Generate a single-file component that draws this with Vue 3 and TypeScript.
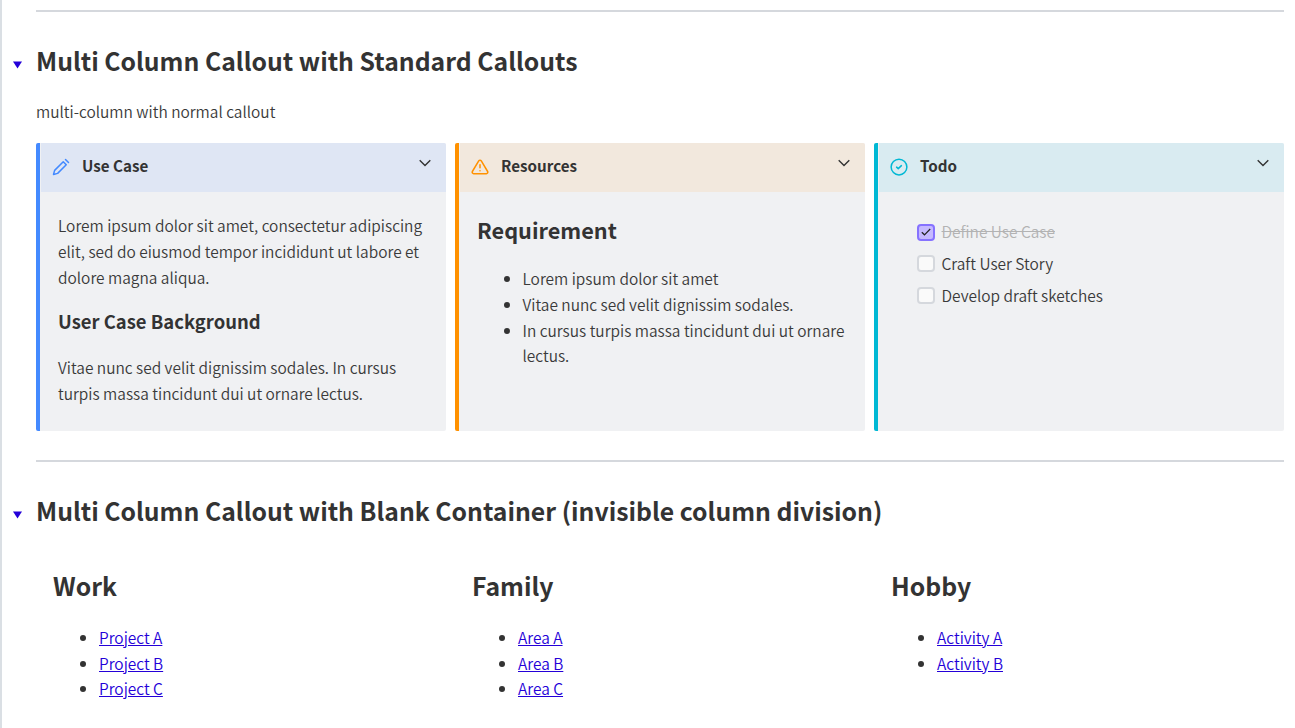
<script setup lang="ts">
interface LinkGroup {
  title: string
  links: string[]
}
interface Task {
  label: string
  done: boolean
}

const requirements: string[] = [
  'Lorem ipsum dolor sit amet',
  'Vitae nunc sed velit dignissim sodales.',
  'In cursus turpis massa tincidunt dui ut ornare lectus.',
]
const tasks: Task[] = [
  { label: 'Define Use Case', done: true },
  { label: 'Craft User Story', done: false },
  { label: 'Develop draft sketches', done: false },
]
const groups: LinkGroup[] = [
  { title: 'Work', links: ['Project A', 'Project B', 'Project C'] },
  { title: 'Family', links: ['Area A', 'Area B', 'Area C'] },
  { title: 'Hobby', links: ['Activity A', 'Activity B'] },
]
</script>

<template>
  <main class="page">
    <hr class="rule" />
    <h1 class="heading">
      <svg class="marker" viewBox="0 0 9 8"><path d="M0 .6h9L4.500 7.400z" /></svg>
      <span>Multi Column Callout with Standard Callouts</span>
    </h1>
    <p class="intro">multi-column with normal callout</p>

    <div class="columns">
      <section class="callout blue">
        <header class="bar">
          <svg class="icon" viewBox="0 0 24 24"><path d="M18 2l4 4M7.500 20.500L19 9l-4-4L3.500 16.500 2 22z" /></svg>
          <span class="title">Use Case</span>
          <svg class="chevron" viewBox="0 0 12 8"><path d="M.7 1.200L6 6.500l5.300-5.300" /></svg>
        </header>
        <div class="body">
          <p class="text">Lorem ipsum dolor sit amet, consectetur adipiscing elit, sed do eiusmod tempor incididunt ut labore et dolore magna aliqua.</p>
          <h3 class="sub">User Case Background</h3>
          <p class="text">Vitae nunc sed velit dignissim sodales. In cursus turpis massa tincidunt dui ut ornare lectus.</p>
        </div>
      </section>

      <section class="callout orange">
        <header class="bar">
          <svg class="icon" viewBox="0 0 24 24"><path d="M10.290 3.860L1.820 18a2 2 0 0 0 1.710 3h16.940a2 2 0 0 0 1.710-3L13.710 3.860a2 2 0 0 0-3.420 0zM12 9v4M12 17h.01" /></svg>
          <span class="title">Resources</span>
          <svg class="chevron" viewBox="0 0 12 8"><path d="M.7 1.200L6 6.500l5.300-5.300" /></svg>
        </header>
        <div class="body">
          <h2 class="require">Requirement</h2>
          <ul class="list">
            <li v-for="r in requirements" :key="r">{{ r }}</li>
          </ul>
        </div>
      </section>

      <section class="callout cyan">
        <header class="bar">
          <svg class="icon" viewBox="0 0 24 24"><circle cx="12" cy="12" r="10.500" /><path d="M8.800 12.200l2.200 2 4.200-4" /></svg>
          <span class="title">Todo</span>
          <svg class="chevron" viewBox="0 0 12 8"><path d="M.7 1.200L6 6.500l5.300-5.300" /></svg>
        </header>
        <div class="body">
          <ul class="tasks">
            <li v-for="t in tasks" :key="t.label" :class="{ done: t.done }">
              <span class="box">
                <svg v-if="t.done" viewBox="0 0 10 8"><path d="M.8 4.200l2.700 2.600L9.200 1" /></svg>
              </span>
              <span class="label">{{ t.label }}</span>
            </li>
          </ul>
        </div>
      </section>
    </div>

    <hr class="rule second" />
    <h1 class="heading">
      <svg class="marker" viewBox="0 0 9 8"><path d="M0 .6h9L4.500 7.400z" /></svg>
      <span>Multi Column Callout with Blank Container (invisible column division)</span>
    </h1>

    <div class="columns blank">
      <section v-for="g in groups" :key="g.title" class="group">
        <h1 class="heading">{{ g.title }}</h1>
        <ul class="list">
          <li v-for="l in g.links" :key="l"><a href="#">{{ l }}</a></li>
        </ul>
      </section>
    </div>
  </main>
</template>

<style>
body {
  margin: 0;
  overflow: hidden;
  background: #fff;
}
</style>

<style scoped>
.page {
  box-sizing: border-box;
  height: 728px;
  padding: 10px 11px 0 34px;
  border-left: 2px solid #dadfe4;
  overflow: hidden;
  color: #3a3a3a;
  font-family: "Noto Sans CJK SC", "Noto Sans", sans-serif;
  font-size: 15.450px;
  font-weight: 350;
  line-height: 25.700px;
}
h1, h2, h3, p, ul, hr {
  margin: 0;
  padding: 0;
}
h1, h2, h3, .title, li::marker {
  color: #333;
}
.rule {
  height: 2px;
  border: 0;
  background: #d5d8dd;
}
.rule.second {
  margin-top: 29px;
}
.heading {
  display: flex;
  align-items: center;
  height: 40px;
  margin-top: 28px;
  font-size: 24.770px;
  font-weight: 700;
  line-height: 40px;
  white-space: nowrap;
}
.marker {
  width: 9px;
  height: 8px;
  margin: 9px 14px 0 -23px;
  fill: #2400d8;
}
.intro {
  margin-top: 19px;
  height: 26px;
}
.columns {
  display: grid;
  grid-template-columns: repeat(3, 410px);
  gap: 9px;
}
.intro + .columns {
  margin-top: 18px;
}
.callout {
  box-sizing: border-box;
  height: 288px;
  border-left: 4px solid var(--accent);
  border-radius: 2px;
  background: #f0f1f3;
  overflow: hidden;
}
.blue { --accent: #448aff; --tint: #dfe6f4; }
.orange { --accent: #ff9100; --tint: #f2e8dd; }
.cyan { --accent: #00b8d4; --tint: #d9ebf1; }
.bar {
  display: flex;
  align-items: center;
  box-sizing: border-box;
  height: 49px;
  margin-left: 1px;
  padding: 0 15px 3px 11px;
  background: var(--tint);
}
.icon {
  width: 18px;
  height: 18px;
  margin-top: 2px;
  fill: none;
  stroke: var(--accent);
  stroke-width: 2;
  stroke-linecap: round;
  stroke-linejoin: round;
}
.title {
  flex: 1;
  margin-left: 12px;
  font-weight: 700;
  font-size: 15.200px;
}
.chevron {
  width: 12px;
  height: 8px;
  margin-bottom: 6px;
  fill: none;
  stroke: #333;
  stroke-width: 1.400;
}
.body {
  padding: 21.300px 16px 0 18px;
}
.sub {
  margin: 18px 0 21px;
  font-size: 18.450px;
  font-weight: 700;
  line-height: 26px;
}
.require {
  margin: 1px 0 20px;
  font-size: 21.700px;
  font-weight: 700;
  line-height: 32px;
}
.list {
  padding-left: 45.500px;
  list-style: disc;
}
.tasks {
  margin-top: 2.700px;
  padding-left: 21px;
  list-style: none;
}
.tasks li {
  display: flex;
  align-items: center;
  height: 32px;
}
.box {
  display: flex;
  align-items: center;
  justify-content: center;
  box-sizing: border-box;
  width: 18px;
  height: 17px;
  margin-right: 6.500px;
  border: 2px solid #d5d8dd;
  border-radius: 4px;
  background: #fafafa;
}
.done .box {
  margin-top: 1px;
  border-color: #8672ff;
  background: #c5b9ff;
}
.box svg {
  width: 10px;
  height: 8px;
  fill: none;
  stroke: #222;
  stroke-width: 1.200;
}
.done .label {
  color: #b3b3b3;
  text-decoration: line-through;
}
.blank {
  margin-top: 35px;
}
.group {
  padding-left: 17px;
}
.group .heading {
  margin: 0;
}
.group .list {
  margin-top: 19.800px;
  padding-left: 46px;
}
a {
  color: #2400d8;
  text-decoration: underline;
}
</style>
